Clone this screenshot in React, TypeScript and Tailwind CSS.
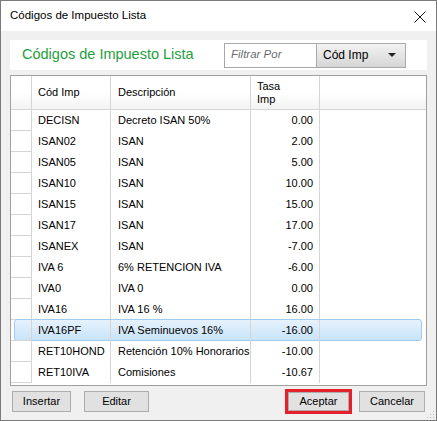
import React from "react";

const rows = [
  { code: "DECISN", desc: "Decreto ISAN 50%", rate: "0.00" },
  { code: "ISAN02", desc: "ISAN", rate: "2.00" },
  { code: "ISAN05", desc: "ISAN", rate: "5.00" },
  { code: "ISAN10", desc: "ISAN", rate: "10.00" },
  { code: "ISAN15", desc: "ISAN", rate: "15.00" },
  { code: "ISAN17", desc: "ISAN", rate: "17.00" },
  { code: "ISANEX", desc: "ISAN", rate: "-7.00" },
  { code: "IVA 6", desc: "6% RETENCION IVA", rate: "-6.00" },
  { code: "IVA0", desc: "IVA 0", rate: "0.00" },
  { code: "IVA16", desc: "IVA 16 %", rate: "16.00" },
  { code: "IVA16PF", desc: "IVA Seminuevos 16%", rate: "-16.00", selected: true },
  { code: "RET10HOND", desc: "Retención 10% Honorarios", rate: "-10.00" },
  { code: "RET10IVA", desc: "Comisiones", rate: "-10.67" },
];

export default function App() {
  return (
    <div className="flex h-[421px] w-[437px] flex-col overflow-hidden border border-[#7a7a7a] bg-[#f0f0f0] font-['Liberation_Sans',Arial,sans-serif] text-[11px] text-black">
      {/* title bar */}
      <div className="flex h-[30px] shrink-0 items-center justify-between bg-white pl-[9px] pr-[10px]">
        <span className="text-[11.5px]">Códigos de Impuesto Lista</span>
        <svg width="12" height="12" viewBox="0 0 12 12" className="mt-[1px]">
          <path d="M0.5 0.5 L11.5 11.5 M11.5 0.5 L0.5 11.5" stroke="#111" strokeWidth="1" />
        </svg>
      </div>

      <div className="flex flex-1 flex-col px-[9px] pt-[9px]">
        {/* header panel */}
        <div className="flex h-[30px] items-center justify-between bg-white pl-[12px] pr-[21px]">
          <span className="text-[14.5px] text-[#23a03c]">Códigos de Impuesto Lista</span>
          <div className="flex h-[25px] items-stretch">
            <div className="flex w-[93px] items-center border border-[#a8a8a8] bg-white pl-[6px] text-[11.5px] italic text-[#6d6d6d]">
              Filtrar Por
            </div>
            <div className="flex w-[89px] items-center justify-between border border-l-0 border-[#a8a8a8] bg-gradient-to-b from-[#f2f2f2] to-[#d6d6d6] pl-[6px] pr-[9px] text-[12px]">
              <span>Cód Imp</span>
              <svg width="8" height="4" viewBox="0 0 8 4">
                <path d="M0 0 L8 0 L4 4 Z" fill="#222" />
              </svg>
            </div>
          </div>
        </div>

        {/* grid */}
        <div className="relative mt-[5px] h-[311px] overflow-hidden border border-[#a0a0a0] bg-white">
          <div className="flex h-[34px] border-b border-[#d5d5d5] bg-gradient-to-b from-white from-50% to-[#f3f3f3]">
            <div className="w-[21px] shrink-0 border-r border-[#d5d5d5]" />
            <div className="flex w-[79px] shrink-0 items-center border-r border-[#d5d5d5] pl-[6px]">Cód Imp</div>
            <div className="flex w-[140px] shrink-0 items-center border-r border-[#d5d5d5] pl-[7px]">Descripción</div>
            <div className="flex w-[69px] shrink-0 flex-col justify-center border-r border-[#d5d5d5] pl-[6px] leading-[13px]">
              <span>Tasa</span>
              <span>Imp</span>
            </div>
            <div className="flex-1" />
          </div>

          {rows.map((r) => (
            <div key={r.code} className="relative flex h-[21px] whitespace-nowrap">
              {r.selected && (
                <div className="absolute top-[-1px] bottom-0 left-[3px] right-[4px] rounded-[3px] border border-[#9fcdf2] bg-gradient-to-b from-[#e6f2fd] to-[#c8e4f9]" />
              )}
              <div className="relative w-[21px] shrink-0 border-r border-b border-[#d5d5d5]" />
              <div className="relative flex w-[79px] shrink-0 items-center border-r border-[#d5d5d5] pl-[6px]">{r.code}</div>
              <div className="relative flex w-[140px] shrink-0 items-center border-r border-[#d5d5d5] pl-[7px]">{r.desc}</div>
              <div className="relative flex w-[69px] shrink-0 items-center justify-end border-r border-[#d5d5d5] pr-[6px]">{r.rate}</div>
              <div className="flex-1" />
            </div>
          ))}
        </div>

        {/* buttons */}
        <div className="flex items-center pt-[3px]">
          <button className="ml-[2px] h-[21px] w-[59px] border border-[#adadad] bg-[#e1e1e1]">Insertar</button>
          <button className="ml-[13px] h-[21px] w-[65px] border border-[#adadad] bg-[#e1e1e1]">Editar</button>
          <div className="ml-[136px] border-[3px] border-[#e3202c]">
            <button className="h-[19px] w-[61px] border border-[#adadad] bg-[#e1e1e1]">Aceptar</button>
          </div>
          <button className="ml-[7px] h-[21px] w-[66px] border border-[#adadad] bg-[#e1e1e1]">Cancelar</button>
        </div>
      </div>

      {/* resize grip */}
      <div className="relative h-0">
        <svg width="8" height="8" viewBox="0 0 8 8" className="absolute right-[1px] bottom-[1px]">
          <rect x="6" y="0" width="1" height="1" fill="#b5b5b5" />
          <rect x="3" y="3" width="1" height="1" fill="#b5b5b5" />
          <rect x="6" y="3" width="1" height="1" fill="#b5b5b5" />
          <rect x="0" y="6" width="1" height="1" fill="#b5b5b5" />
          <rect x="3" y="6" width="1" height="1" fill="#b5b5b5" />
          <rect x="6" y="6" width="1" height="1" fill="#b5b5b5" />
        </svg>
      </div>
    </div>
  );
}
